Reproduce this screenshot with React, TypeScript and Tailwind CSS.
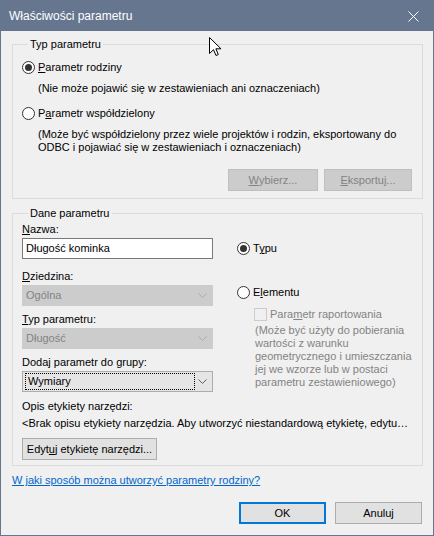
import React from "react";

const Radio: React.FC<{ checked?: boolean }> = ({ checked }) => (
  <span className="w-[13px] h-[13px] shrink-0 rounded-full border border-[#333333] bg-white flex items-center justify-center">
    {checked && <span className="w-[7px] h-[7px] rounded-full bg-[#333333]" />}
  </span>
);

const Chevron: React.FC<{ color: string }> = ({ color }) => (
  <svg width="9" height="5" viewBox="0 0 9 5" className="shrink-0">
    <path d="M0.5 0.5 L4.5 4.5 L8.5 0.5" fill="none" stroke={color} strokeWidth="1" />
  </svg>
);

const DisabledSelect: React.FC<{ value: string }> = ({ value }) => (
  <div className="h-[21px] flex items-center bg-[#cccccc] border border-[#cccccc] pl-[3px] pr-[5px] text-[#838383]">
    <span className="leading-[15px]">{value}</span>
    <span className="ml-auto">
      <Chevron color="#ababab" />
    </span>
  </div>
);

const Label: React.FC<React.PropsWithChildren<{ className?: string }>> = ({ children, className }) => (
  <div className={`leading-[15px] whitespace-nowrap ${className ?? ""}`}>{children}</div>
);

export default function App() {
  return (
    <div className="relative w-[434px] h-[536px] flex flex-col border border-[#66768f] bg-[#f0f0f0] text-[11px] text-black font-['Liberation_Sans',Arial,sans-serif]">
      {/* title bar */}
      <div className="h-[30px] shrink-0 flex items-center bg-[#66768f] pl-[8px] pr-[14px]">
        <span className="text-white text-[12px] leading-[15px]">Właściwości parametru</span>
        <svg width="11" height="11" viewBox="0 0 11 11" className="ml-auto">
          <path d="M0.5 0.5 L10.5 10.5 M10.5 0.5 L0.5 10.5" stroke="#ffffff" strokeWidth="1" />
        </svg>
      </div>

      <div className="flex flex-col pl-[11px] pr-[10px]">
        {/* Typ parametru */}
        <fieldset className="mt-[6px] border border-[#dcdcdc] pl-[9px] pr-[10px] pb-[7px]">
          <legend className="ml-[6px] px-[2px] leading-[15px]">Typ parametru</legend>
          <div className="mt-[8px] flex items-center gap-[3px] h-[15px]">
            <Radio checked />
            <span className="leading-[15px]">
              <span className="underline">P</span>arametr rodziny
            </span>
          </div>
          <div className="mt-[6px] pl-[16px] leading-[15px]">
            (Nie może pojawić się w zestawieniach ani oznaczeniach)
          </div>
          <div className="mt-[10px] flex items-center gap-[3px] h-[15px]">
            <Radio />
            <span className="leading-[15px]">
              P<span className="underline">a</span>rametr współdzielony
            </span>
          </div>
          <div className="mt-[7px] pl-[16px] leading-[13px]">
            <div className="whitespace-nowrap">
              (Może być współdzielony przez wiele projektów i rodzin, eksportowany do
            </div>
            <div className="whitespace-nowrap">ODBC i pojawiać się w zestawieniach i oznaczeniach)</div>
          </div>
          <div className="mt-[15px] flex justify-end gap-[6px]">
            <div className="w-[90px] h-[22px] flex items-center justify-center bg-[#cccccc] border border-[#bfbfbf] text-[#838383]">
              <span>
                <span className="underline">W</span>ybierz...
              </span>
            </div>
            <div className="w-[88px] h-[22px] flex items-center justify-center bg-[#cccccc] border border-[#bfbfbf] text-[#838383]">
              <span>
                <span className="underline">E</span>ksportuj...
              </span>
            </div>
          </div>
        </fieldset>

        {/* Dane parametru */}
        <fieldset className="mt-[7px] border border-[#dcdcdc] pl-[9px] pr-[10px] pb-[5px]">
          <legend className="ml-[6px] px-[2px] leading-[15px]">Dane parametru</legend>
          <div className="mt-[1px] flex">
            <div className="w-[191px] flex flex-col">
              <Label>
                <span className="underline">N</span>azwa:
              </Label>
              <div className="mt-[1px] h-[21px] flex items-center bg-white border border-[#7a7a7a] pl-[3px]">
                Długość kominka
              </div>
              <Label className="mt-[10px]">
                <span className="underline">D</span>ziedzina:
              </Label>
              <div className="mt-[1px]">
                <DisabledSelect value="Ogólna" />
              </div>
              <Label className="mt-[6px]">
                <span className="underline">T</span>yp parametru:
              </Label>
              <div className="mt-[1px]">
                <DisabledSelect value="Długość" />
              </div>
              <Label className="mt-[6px]">Dodaj parametr do grupy:</Label>
              <div className="mt-[1px] h-[21px] flex items-center bg-[#e5e5e5] border border-[#adadad] pl-[2px] pr-[5px]">
                <div className="w-[170px] h-[17px] flex items-center border border-dotted border-black pl-[2px]">
                  Wymiary
                </div>
                <span className="ml-auto">
                  <Chevron color="#606060" />
                </span>
              </div>
            </div>

            <div className="ml-[24px] flex flex-col">
              <div className="mt-[19px] flex items-center gap-[3px] h-[15px]">
                <Radio checked />
                <span>
                  T<span className="underline">y</span>pu
                </span>
              </div>
              <div className="mt-[29px] flex items-center gap-[3px] h-[15px]">
                <Radio />
                <span>
                  E<span className="underline">l</span>ementu
                </span>
              </div>
              <div className="mt-[7px] ml-[17px] flex items-center gap-[3px] h-[15px] text-[#838383]">
                <span className="w-[13px] h-[13px] border border-[#cccccc] bg-[#f0f0f0]" />
                <span>
                  Para<span className="underline">m</span>etr raportowania
                </span>
              </div>
              <div className="mt-[2px] ml-[18px] leading-[13px] text-[#838383] whitespace-nowrap">
                <div>(Może być użyty do pobierania</div>
                <div>wartości z warunku</div>
                <div>geometrycznego i umieszczania</div>
                <div>jej we wzorze lub w postaci</div>
                <div>parametru zestawieniowego)</div>
              </div>
            </div>
          </div>

          <Label className="mt-[7px]">Opis etykiety narzędzi:</Label>
          <div className="mt-[2px] leading-[15px] whitespace-nowrap overflow-hidden">
            &lt;Brak opisu etykiety narzędzia. Aby utworzyć niestandardową etykietę, edytu…
          </div>
          <div className="mt-[7px] w-[135px] h-[22px] flex items-center justify-center bg-[#e1e1e1] border border-[#adadad] whitespace-nowrap">
            <span>
              Edyt<span className="underline">u</span>j etykietę narzędzi...
            </span>
          </div>
        </fieldset>

        <div className="mt-[7px] leading-[15px]">
          <span className="text-[#0066cc] underline">W jaki sposób można utworzyć parametry rodziny?</span>
        </div>

        <div className="mt-[14px] flex justify-end gap-[9px] pr-[1px]">
          <div className="w-[87px] h-[22px] flex items-center justify-center bg-[#e1e1e1] border-2 border-[#0078d7]">
            OK
          </div>
          <div className="w-[87px] h-[22px] flex items-center justify-center bg-[#e1e1e1] border border-[#adadad]">
            Anuluj
          </div>
        </div>
      </div>

      {/* mouse pointer */}
      <svg width="13" height="20" viewBox="0 0 13 20" className="absolute left-[208px] top-[36px]">
        <path
          d="M0.5 0.5 V16.5 L4.5 12.7 L7 18.5 L9.3 17.5 L6.9 11.8 H12 Z"
          fill="#ffffff"
          stroke="#000000"
          strokeWidth="1"
          strokeLinejoin="miter"
        />
      </svg>
    </div>
  );
}
